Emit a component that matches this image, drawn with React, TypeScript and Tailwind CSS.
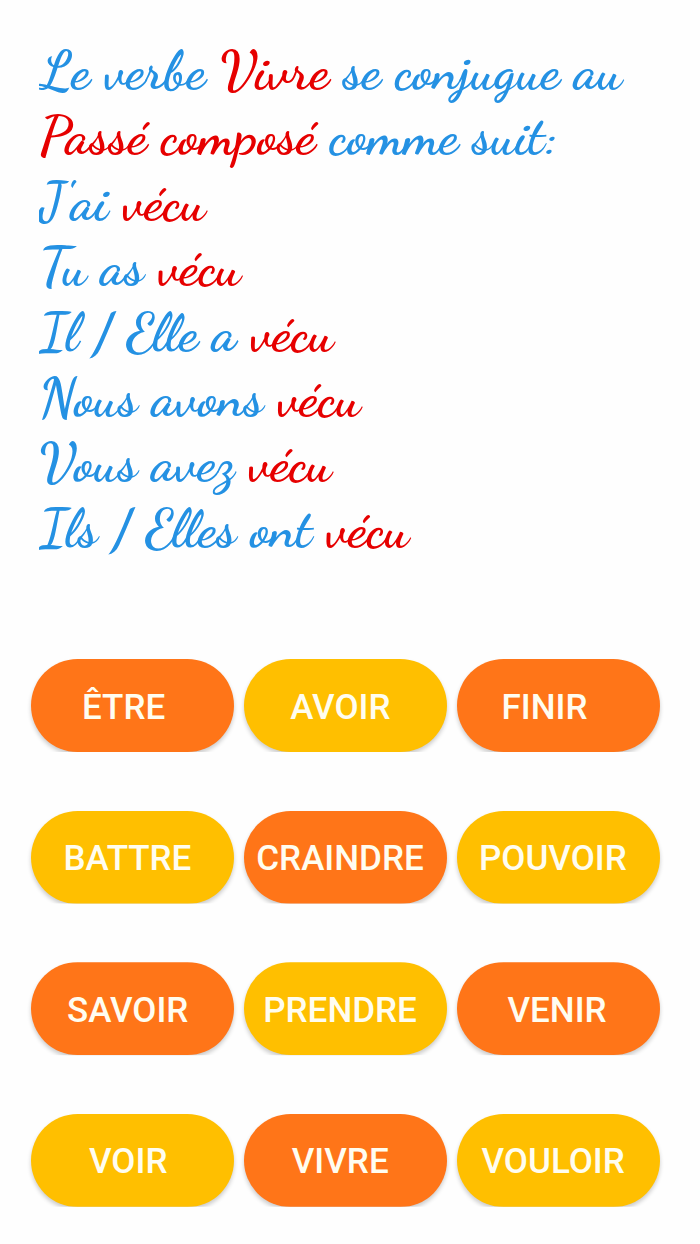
import { clsx } from "clsx";

// words between asterisks are drawn in red
const lines = [
  "Le verbe *Vivre* se conjugue au",
  "*Passé composé* comme suit:",
  "J'ai *vécu*",
  "Tu as *vécu*",
  "Il / Elle a *vécu*",
  "Nous avons *vécu*",
  "Vous avez *vécu*",
  "Ils / Elles ont *vécu*",
];

const verbs = [
  { label: "ÊTRE", pad: "pl-[51px]" },
  { label: "AVOIR", pad: "pl-[46.5px]" },
  { label: "FINIR", pad: "pl-[45px]" },
  { label: "BATTRE", pad: "pl-[32.5px]" },
  { label: "CRAINDRE", pad: "pl-[12.5px]" },
  { label: "POUVOIR", pad: "pl-[22.5px]" },
  { label: "SAVOIR", pad: "pl-[36px]" },
  { label: "PRENDRE", pad: "pl-[19.5px]" },
  { label: "VENIR", pad: "pl-[51px]" },
  { label: "VOIR", pad: "pl-[58px]" },
  { label: "VIVRE", pad: "pl-[48px]" },
  { label: "VOULOIR", pad: "pl-[25px]" },
];

function Conjugation() {
  return (
    <div className="ml-[39px] h-[621px] overflow-hidden font-['Dancing_Script','Liberation_Serif',serif] text-[54.4px] leading-[65.4px] font-bold text-[#2491e3]">
      {lines.map((line) => (
        <p key={line} className="whitespace-nowrap">
          {line.split("*").map((part, i) => (
            <span key={i} className={clsx(i % 2 === 1 && "text-[#e60000]")}>
              {part}
            </span>
          ))}
        </p>
      ))}
    </div>
  );
}

export default function App() {
  return (
    <main className="h-[1244px] w-[700px] overflow-hidden bg-[#fefefe] pt-[38px]">
      <Conjugation />
      <div className="ml-[31px] grid w-[628.5px] grid-cols-3 gap-x-[9.75px] gap-y-[58.6px]">
        {verbs.map((verb, i) => (
          <button
            key={verb.label}
            className={clsx(
              "h-[93px] rounded-full pt-[3px] text-left font-['Roboto',sans-serif] text-[35px] leading-none font-medium whitespace-nowrap text-[#fffdf0]",
              "shadow-[0_3px_4px_rgba(0,0,0,0.2)] [clip-path:inset(0_-8px_0_-8px)]",
              i % 2 === 0 ? "bg-[#ff7518]" : "bg-[#ffbf00]",
              verb.pad
            )}>
            {verb.label}
          </button>
        ))}
      </div>
    </main>
  );
}
